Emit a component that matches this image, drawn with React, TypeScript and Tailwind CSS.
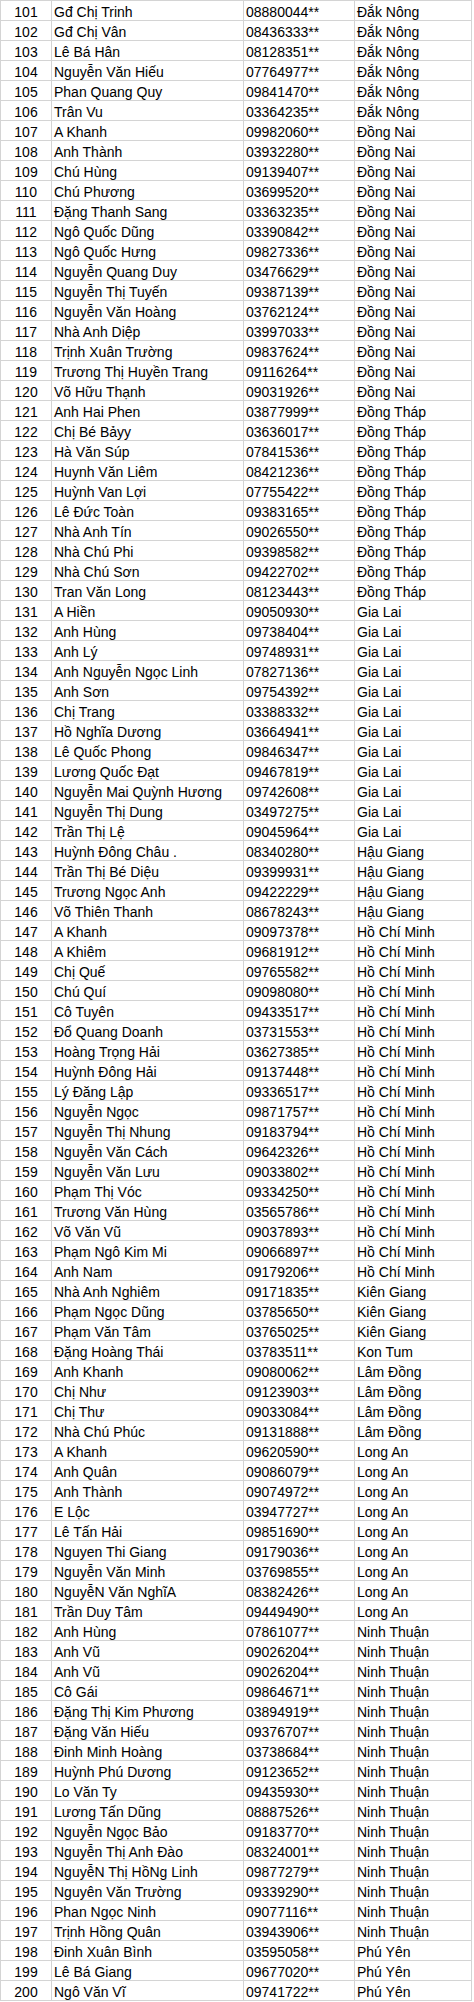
const raw = `101|Gđ Chị Trinh|08880044**|Đắk Nông
102|Gđ Chị Vân|08436333**|Đắk Nông
103|Lê Bá Hân|08128351**|Đắk Nông
104|Nguyễn Văn Hiếu|07764977**|Đắk Nông
105|Phan Quang Quy|09841470**|Đắk Nông
106|Trân Vu|03364235**|Đắk Nông
107|A Khanh|09982060**|Đồng Nai
108|Anh Thành|03932280**|Đồng Nai
109|Chú Hùng|09139407**|Đồng Nai
110|Chú Phương|03699520**|Đồng Nai
111|Đặng Thanh Sang|03363235**|Đồng Nai
112|Ngô Quốc Dũng|03390842**|Đồng Nai
113|Ngô Quốc Hưng|09827336**|Đồng Nai
114|Nguyễn Quang Duy|03476629**|Đồng Nai
115|Nguyễn Thị Tuyến|09387139**|Đồng Nai
116|Nguyễn Văn Hoàng|03762124**|Đồng Nai
117|Nhà Anh Diệp|03997033**|Đồng Nai
118|Trịnh Xuân Trường|09837624**|Đồng Nai
119|Trương Thị Huyền Trang|09116264**|Đồng Nai
120|Võ Hữu Thạnh|09031926**|Đồng Nai
121|Anh Hai Phen|03877999**|Đồng Tháp
122|Chị Bé Bảyy|03636017**|Đồng Tháp
123|Hà Văn Súp|07841536**|Đồng Tháp
124|Huynh Văn Liêm|08421236**|Đồng Tháp
125|Huỳnh Van Lợi|07755422**|Đồng Tháp
126|Lê Đức Toàn|09383165**|Đồng Tháp
127|Nhà Anh Tín|09026550**|Đồng Tháp
128|Nhà Chú Phi|09398582**|Đồng Tháp
129|Nhà Chú Sơn|09422702**|Đồng Tháp
130|Tran Văn Long|08123443**|Đồng Tháp
131|A Hiền|09050930**|Gia Lai
132|Anh Hùng|09738404**|Gia Lai
133|Anh Lý|09748931**|Gia Lai
134|Anh Nguyễn Ngọc Linh|07827136**|Gia Lai
135|Anh Sơn|09754392**|Gia Lai
136|Chị Trang|03388332**|Gia Lai
137|Hồ Nghĩa Dương|03664941**|Gia Lai
138|Lê Quốc Phong|09846347**|Gia Lai
139|Lương Quốc Đạt|09467819**|Gia Lai
140|Nguyễn Mai Quỳnh Hương|09742608**|Gia Lai
141|Nguyễn Thị Dung|03497275**|Gia Lai
142|Trần Thị Lệ|09045964**|Gia Lai
143|Huỳnh Đông Châu .|08340280**|Hậu Giang
144|Trần Thị Bé Diệu|09399931**|Hậu Giang
145|Trương Ngọc Anh|09422229**|Hậu Giang
146|Võ Thiên Thanh|08678243**|Hậu Giang
147|A Khanh|09097378**|Hồ Chí Minh
148|A Khiêm|09681912**|Hồ Chí Minh
149|Chị Quế|09765582**|Hồ Chí Minh
150|Chú Quí|09098080**|Hồ Chí Minh
151|Cô Tuyên|09433517**|Hồ Chí Minh
152|Đổ Quang Doanh|03731553**|Hồ Chí Minh
153|Hoàng Trọng Hải|03627385**|Hồ Chí Minh
154|Huỳnh Đông Hải|09137448**|Hồ Chí Minh
155|Lý Đăng Lập|09336517**|Hồ Chí Minh
156|Nguyễn Ngọc|09871757**|Hồ Chí Minh
157|Nguyễn Thị Nhung|09183794**|Hồ Chí Minh
158|Nguyễn Văn Cách|09642326**|Hồ Chí Minh
159|Nguyễn Văn Lưu|09033802**|Hồ Chí Minh
160|Phạm Thị Vóc|09334250**|Hồ Chí Minh
161|Trương Văn Hùng|03565786**|Hồ Chí Minh
162|Võ Văn Vũ|09037893**|Hồ Chí Minh
163|Phạm Ngô Kim Mi|09066897**|Hồ Chí Minh
164|Anh Nam|09179206**|Hồ Chí Minh
165|Nhà Anh Nghiêm|09171835**|Kiên Giang
166|Phạm Ngọc Dũng|03785650**|Kiên Giang
167|Phạm Văn Tâm|03765025**|Kiên Giang
168|Đặng Hoàng Thái|03783511**|Kon Tum
169|Anh Khanh|09080062**|Lâm Đồng
170|Chị Như|09123903**|Lâm Đồng
171|Chị Thư|09033084**|Lâm Đồng
172|Nhà Chú Phúc|09131888**|Lâm Đồng
173|A Khanh|09620590**|Long An
174|Anh Quân|09086079**|Long An
175|Anh Thành|09074972**|Long An
176|E Lộc|03947727**|Long An
177|Lê Tấn Hải|09851690**|Long An
178|Nguyen Thi Giang|09179036**|Long An
179|Nguyễn Văn Minh|03769855**|Long An
180|NguyễN Văn NghĩA|08382426**|Long An
181|Trần Duy Tâm|09449490**|Long An
182|Anh Hùng|07861077**|Ninh Thuận
183|Anh Vũ|09026204**|Ninh Thuận
184|Anh Vũ|09026204**|Ninh Thuận
185|Cô Gái|09864671**|Ninh Thuận
186|Đặng Thị Kim Phương|03894919**|Ninh Thuận
187|Đặng Văn Hiếu|09376707**|Ninh Thuận
188|Đinh Minh Hoàng|03738684**|Ninh Thuận
189|Huỳnh Phú Dương|09123652**|Ninh Thuận
190|Lo Văn Ty|09435930**|Ninh Thuận
191|Lương Tấn Dũng|08887526**|Ninh Thuận
192|Nguyễn Ngọc Bảo|09183770**|Ninh Thuận
193|Nguyễn Thị Anh Đào|08324001**|Ninh Thuận
194|NguyễN Thị HồNg Linh|09877279**|Ninh Thuận
195|Nguyên Văn Trường|09339290**|Ninh Thuận
196|Phan Ngọc Ninh|09077116**|Ninh Thuận
197|Trịnh Hồng Quân|03943906**|Ninh Thuận
198|Đinh Xuân Bình|03595058**|Phú Yên
199|Lê Bá Giang|09677020**|Phú Yên
200|Ngô Văn Vĩ|09741722**|Phú Yên`;

const rows = raw.split("\n").map((line) => line.split("|"));

const cell = "h-[20px] border-r border-b border-[#d4d4d4] pt-[3px] leading-[16px] whitespace-nowrap overflow-hidden";

export default function App() {
  return (
    <div className="min-h-screen bg-white text-black font-['Liberation_Sans',Arial,sans-serif] text-[14px]">
      <div className="grid w-[472px] grid-cols-[51px_192px_111px_117px] border-l border-t border-[#d4d4d4]">
        {rows.map(([no, name, phone, place]) => (
          <div key={no} className="contents">
            <div className={`${cell} text-center`}>{no}</div>
            <div className={`${cell} pl-[2px]`}>{name}</div>
            <div className={`${cell} pl-[2px]`}>{phone}</div>
            <div className={`${cell} pl-[2px]`}>{place}</div>
          </div>
        ))}
      </div>
    </div>
  );
}
